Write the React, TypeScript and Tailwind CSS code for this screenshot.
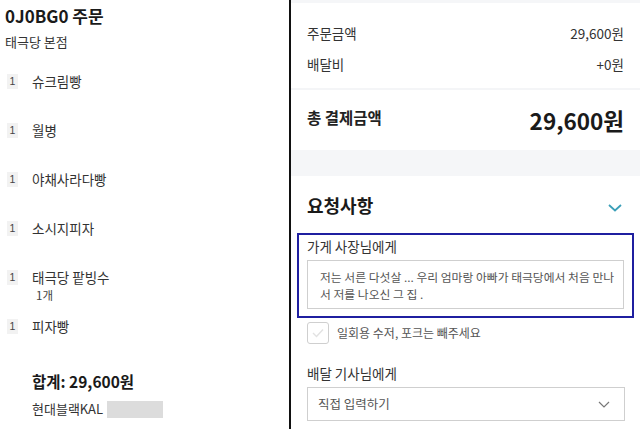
import React from "react";

const items: { name: string; sub?: string }[] = [
  { name: "슈크림빵" },
  { name: "월병" },
  { name: "야채사라다빵" },
  { name: "소시지피자" },
  { name: "태극당 팥빙수", sub: "1개" },
  { name: "피자빵" },
];

export default function App() {
  return (
    <div
      className="flex w-[640px] h-[429px] overflow-hidden bg-white text-[#222]"
      style={{ fontFamily: '"Noto Sans CJK KR", "Noto Sans", sans-serif' }}
    >
      {/* Left panel */}
      <div className="w-[291px] shrink-0 border-r-[2px] border-[#111] pl-[5px] pt-[4px]">
        <div className="text-[17px] leading-[24px] font-bold text-[#1a1a1a]">0J0BG0 주문</div>
        <div className="mt-[4px] text-[13px] leading-[20px] text-[#333]">태극당 본점</div>
        <div className="mt-[19px]">
          {items.map((it, i) => (
            <div key={i} className="h-[49px]">
              <div className="flex items-center h-[20px]">
                <span
                  className="ml-[2px] w-[11px] h-[15px] flex items-center justify-center bg-[#f2f2f2] text-[10.5px] leading-[15px] text-[#444]"
                  style={{ fontFamily: '"Liberation Sans", Arial, sans-serif' }}
                >
                  1
                </span>
                <span className="ml-[14px] text-[13.5px] leading-[20px] text-[#333]">{it.name}</span>
              </div>
              {it.sub && (
                <div className="ml-[31px] mt-[-1px] text-[11.5px] leading-[18px] text-[#444]">{it.sub}</div>
              )}
            </div>
          ))}
        </div>
        <div className="ml-[27px] mt-[5px] text-[15.5px] leading-[22px] font-bold text-[#1a1a1a]">합계: 29,600원</div>
        <div className="ml-[27px] mt-[7px] flex items-center text-[13px] leading-[20px] text-[#333]">
          현대블랙KAL
          <span className="ml-[4px] w-[56px] h-[17px] bg-[#dcdcdc]" />
        </div>
      </div>

      {/* Right panel */}
      <div className="flex-1 flex flex-col">
        <div className="h-[3px] bg-[#f5f6f8]" />
        <div className="pl-[16px] pr-[16px] pt-[20px]">
          <div className="flex justify-between text-[13.5px] leading-[20px] text-[#333]">
            <span>주문금액</span>
            <span>29,600원</span>
          </div>
          <div className="mt-[11px] flex justify-between text-[13.5px] leading-[20px] text-[#333]">
            <span>배달비</span>
            <span>+0원</span>
          </div>
        </div>
        <div className="mt-[14px] h-[2px] bg-[#f4f5f7]" />
        <div className="pl-[16px] pr-[16px] flex justify-between items-center h-[60px]">
          <span className="text-[15.5px] font-bold text-[#222] mt-[-5px]">총 결제금액</span>
          <span className="text-[22.5px] font-bold text-[#1a1a1a] leading-[30px]">29,600원</span>
        </div>
        <div className="h-[26px] bg-[#f5f6f8]" />
        <div className="pl-[16px] pr-[16px] pt-[17px] flex justify-between items-center">
          <span className="text-[18px] leading-[24px] font-bold text-[#1a1a1a]">요청사항</span>
          <svg width="14" height="8" viewBox="0 0 14 8" className="mr-[2px] mt-[6px]">
            <path d="M1 1 L7 6.5 L13 1" fill="none" stroke="#3b9fb8" strokeWidth="1.8" />
          </svg>
        </div>
        <div className="ml-[6px] mr-[6px] mt-[16px] border-2 border-[#1f1fa0] px-[8px] pt-[1px] pb-[7px]">
          <div className="text-[13.5px] leading-[20px] text-[#333]">가게 사장님에게</div>
          <div className="mt-[4px] h-[49px] border border-[#cfcfcf] pl-[12px] pr-[2px] pt-[7px] text-[11.8px] leading-[17px] text-[#555]">
            저는 서른 다섯살 ... 우리 엄마랑 아빠가 태극당에서 처음 만나서 저를 나오신 그 집 .
          </div>
        </div>
        <div className="pl-[16px] mt-[4px] flex items-center">
          <div className="w-[22px] h-[22px] rounded-[3px] border border-[#cfcfcf] flex items-center justify-center">
            <svg width="12" height="10" viewBox="0 0 12 10">
              <path d="M1 5 L4.5 8.5 L11 1.5" fill="none" stroke="#e2e2e2" strokeWidth="1.4" />
            </svg>
          </div>
          <span className="ml-[8px] text-[12px] leading-[18px] text-[#555]">일회용 수저, 포크는 빼주세요</span>
        </div>
        <div className="pl-[16px] mt-[19px] text-[13.5px] leading-[20px] text-[#333]">배달 기사님에게</div>
        <div className="ml-[16px] mr-[15px] mt-[4px] h-[34px] border border-[#cfcfcf] flex items-center justify-between pl-[10px] pr-[14px]">
          <span className="text-[12.5px] text-[#555]">직접 입력하기</span>
          <svg width="12" height="7" viewBox="0 0 12 7">
            <path d="M1 1 L6 6 L11 1" fill="none" stroke="#777" strokeWidth="1.2" />
          </svg>
        </div>
      </div>
    </div>
  );
}
